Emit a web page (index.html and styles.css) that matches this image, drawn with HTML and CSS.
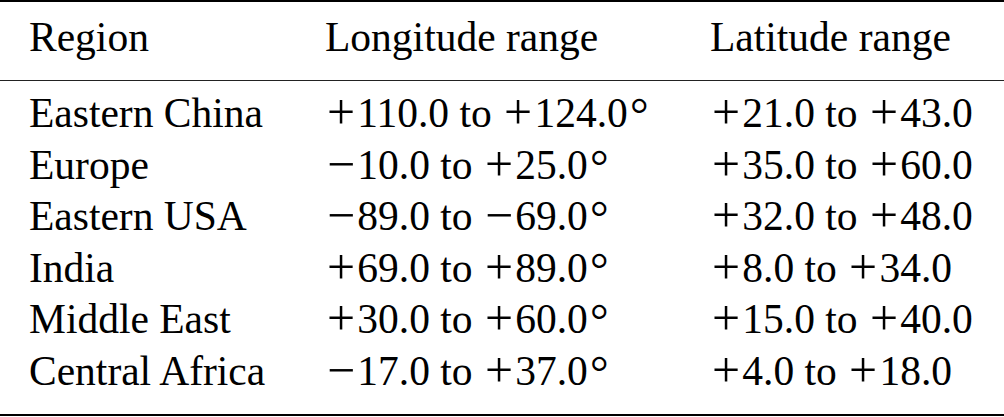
FILE: index.html
```html
<!DOCTYPE html>
<html lang="en">
<head>
  <meta charset="UTF-8">
  <title>Regions</title>
  <link rel="stylesheet" href="styles.css">
</head>
<body>

<div class="regions">
  <div class="row head">
    <div>Region</div>
    <div>Longitude range</div>
    <div>Latitude range</div>
  </div>

  <div class="body">
    <div class="row">
      <div>Eastern China</div>
      <div><span class="sg">+</span>110.0 to <span class="sg">+</span>124.0<span class="deg">°</span></div>
      <div><span class="sg">+</span>21.0 to <span class="sg">+</span>43.0</div>
    </div>
    <div class="row">
      <div>Europe</div>
      <div><span class="sg">−</span>10.0 to <span class="sg">+</span>25.0<span class="deg">°</span></div>
      <div><span class="sg">+</span>35.0 to <span class="sg">+</span>60.0</div>
    </div>
    <div class="row">
      <div>Eastern USA</div>
      <div><span class="sg">−</span>89.0 to <span class="sg">−</span>69.0<span class="deg">°</span></div>
      <div><span class="sg">+</span>32.0 to <span class="sg">+</span>48.0</div>
    </div>
    <div class="row">
      <div>India</div>
      <div><span class="sg">+</span>69.0 to <span class="sg">+</span>89.0<span class="deg">°</span></div>
      <div><span class="sg">+</span>8.0 to <span class="sg">+</span>34.0</div>
    </div>
    <div class="row">
      <div>Middle East</div>
      <div><span class="sg">+</span>30.0 to <span class="sg">+</span>60.0<span class="deg">°</span></div>
      <div><span class="sg">+</span>15.0 to <span class="sg">+</span>40.0</div>
    </div>
    <div class="row">
      <div>Central Africa</div>
      <div><span class="sg">−</span>17.0 to <span class="sg">+</span>37.0<span class="deg">°</span></div>
      <div><span class="sg">+</span>4.0 to <span class="sg">+</span>18.0</div>
    </div>
  </div>
</div>

</body>
</html>
```

FILE: styles.css
```css
body {
  margin: 0;
  background: #fff;
  color: #000;
  font-family: "Liberation Serif", "Times New Roman", serif;
}

.regions {
  width: 1004px;
  border-top: 2px solid #000;
  border-bottom: 2px solid #000;
  font-size: 41.5px;
  line-height: 51.5px;
}

.row {
  display: grid;
  grid-template-columns: 296px 385px 1fr;
  padding-left: 29px;
  white-space: nowrap;
}

.head {
  padding-top: 10px;
  padding-bottom: 16px;
  border-bottom: 1px solid #222;
}

.body {
  padding-top: 7.5px;
  padding-bottom: 17px;
}

/* math-style signs, wider than the text ones */
.sg {
  display: inline-block;
  width: 0.778em;
  line-height: 20px;
  text-align: center;
  transform: scale(1.2);
  transform-origin: 50% 13.6px;
}

.deg {
  display: inline-block;
  line-height: 20px;
  padding-left: 3px;
  padding-right: 4px;
  transform: scale(1.12);
  transform-origin: 50% 2.4px;
}
```
